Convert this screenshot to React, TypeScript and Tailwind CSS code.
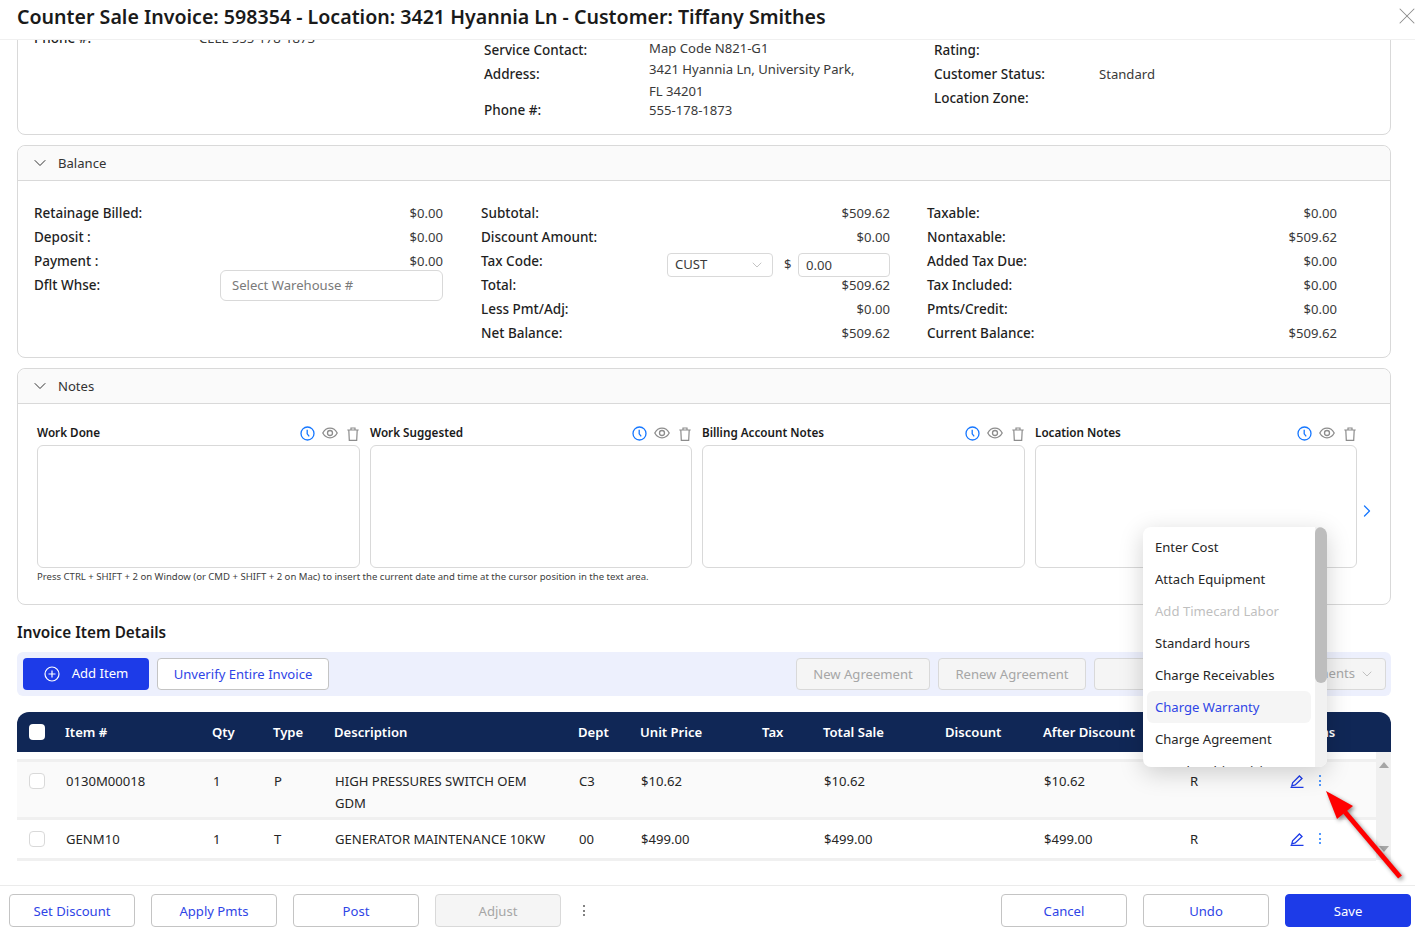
import { ChevronDown, ChevronRight, X } from "lucide-react";
import type { ReactNode } from "react";

const balanceCols: { label: string; value?: string; extra?: "whse" | "tax" }[][] = [
  [
    { label: "Retainage Billed:", value: "$0.00" },
    { label: "Deposit :", value: "$0.00" },
    { label: "Payment :", value: "$0.00" },
    { label: "Dflt Whse:", extra: "whse" },
  ],
  [
    { label: "Subtotal:", value: "$509.62" },
    { label: "Discount Amount:", value: "$0.00" },
    { label: "Tax Code:", extra: "tax" },
    { label: "Total:", value: "$509.62" },
    { label: "Less Pmt/Adj:", value: "$0.00" },
    { label: "Net Balance:", value: "$509.62" },
  ],
  [
    { label: "Taxable:", value: "$0.00" },
    { label: "Nontaxable:", value: "$509.62" },
    { label: "Added Tax Due:", value: "$0.00" },
    { label: "Tax Included:", value: "$0.00" },
    { label: "Pmts/Credit:", value: "$0.00" },
    { label: "Current Balance:", value: "$509.62" },
  ],
];

const notes = ["Work Done", "Work Suggested", "Billing Account Notes", "Location Notes"];

const menuItems = [
  "Enter Cost",
  "Attach Equipment",
  "Add Timecard Labor",
  "Standard hours",
  "Charge Receivables",
  "Charge Warranty",
  "Charge Agreement",
  "Membership Pricing",
];

const gridCols = "grid grid-cols-[48px_147px_61px_61px_244px_62px_122px_61px_122px_98px_147px_100px_1fr]";

function ClockIcon() {
  return (
    <svg width="15" height="15" viewBox="0 0 15 15" fill="none" stroke="#1677ff" strokeWidth="1.300">
      <circle cx="7.5" cy="7.5" r="6.5" />
      <path d="M7.2 3.800v4l2 2.600" />
    </svg>
  );
}

function EyeIcon() {
  return (
    <svg width="16" height="12" viewBox="0 0 16 12" fill="none" stroke="#8c8c8c" strokeWidth="1.300" className="mb-[1px] mr-[2px]">
      <path d="M.8 6c1.700-3.200 4.100-4.800 7.200-4.800S13.500 2.800 15.200 6c-1.700 3.200-4.100 4.800-7.200 4.800S2.500 9.200.8 6z" />
      <circle cx="8" cy="6" r="2.500" />
    </svg>
  );
}

function TrashIcon() {
  return (
    <svg width="12" height="14" viewBox="0 0 12 14" fill="none" stroke="#8c8c8c" strokeWidth="1.200">
      <path d="M.3 3h11.400M4 3V1h4v2M1.800 3l.5 10.400h7.400L10.200 3" />
    </svg>
  );
}

function EditIcon() {
  return (
    <svg width="14" height="13" viewBox="0 0 14 13" fill="none" stroke="#1d3be8" strokeWidth="1.300">
      <path d="M.5 12.300h13M1.800 10.800l.8-3L9.400 1l2.600 2.400-6.800 6.600z" />
    </svg>
  );
}

function Dots({ className }: { className: string }) {
  return (
    <div className={"flex flex-col gap-[2.500px] " + className}>
      <span className="h-[2px] w-[2px] rounded-full bg-current" />
      <span className="h-[2px] w-[2px] rounded-full bg-current" />
      <span className="h-[2px] w-[2px] rounded-full bg-current" />
    </div>
  );
}

function Panel({ title, children }: { title: string; children: ReactNode }) {
  return (
    <section className="rounded-lg border border-[#d9d9d9]">
      <div className="flex h-[35px] items-center gap-[8px] rounded-t-lg border-b border-[#d9d9d9] bg-[#fafafa] pl-[12px]">
        <ChevronDown size={20} strokeWidth={1.200} className="text-[#333]" />
        <span className="pt-[2px] text-[#333]">{title}</span>
      </div>
      {children}
    </section>
  );
}

function FootBtn({ children, variant = "line" }: { children: ReactNode; variant?: "line" | "off" | "fill" }) {
  const tone =
    variant === "fill"
      ? "border-[#1d3be8] bg-[#1d3be8] text-white"
      : variant === "off"
        ? "border-[#d9d9d9] bg-[#f5f5f5] text-[#a6a6a6]"
        : "border-[#c4c4c4] bg-white text-[#2f45e6]";
  return (
    <button className={"flex h-[33px] w-[126px] items-center justify-center rounded border pt-[2px] " + tone}>{children}</button>
  );
}

function InfoRow({ label, value, tall }: { label: string; value?: ReactNode; tall?: boolean }) {
  return (
    <div className={"flex " + (tall ? "h-[36px]" : "h-[24px]")}>
      <span className="w-[165px] shrink-0 text-[13.500px] font-medium leading-[22px]">{label}</span>
      <span className="leading-[22px] text-[#3a3a3a]">{value}</span>
    </div>
  );
}

function TableRow({
  item,
  qty,
  type,
  desc,
  dept,
  price,
  after,
  shade,
}: {
  item: string;
  qty: string;
  type: string;
  desc: ReactNode;
  dept: string;
  price: string;
  after: string;
  shade?: boolean;
}) {
  return (
    <div className={gridCols + " border-b-[3px] border-[#f0f0f0] pt-[8px] leading-[22px] text-[#262626] " + (shade ? "bg-[#fafafa] pb-[3px]" : "bg-white pb-[8px]")}>
      <div className="pl-[12px] pt-[3px]">
        <div className="h-[16px] w-[16px] rounded border border-[#d9d9d9] bg-white" />
      </div>
      <div className="pl-[1px]">{item}</div>
      <div className="pl-[1px]">{qty}</div>
      <div className="pl-[1px]">{type}</div>
      <div className="pl-[1px]">{desc}</div>
      <div className="pl-[1px]">{dept}</div>
      <div className="pl-[1px]">{price}</div>
      <div />
      <div className="pl-[1px]">{price}</div>
      <div />
      <div className="pl-[1px]">{after}</div>
      <div>R</div>
      <div className="flex items-start gap-[15px] pt-[5px]">
        <EditIcon />
        <Dots className="text-[#1677ff]" />
      </div>
    </div>
  );
}

export default function App() {
  return (
    <div
      className="relative flex h-[939px] w-[1415px] flex-col overflow-hidden bg-white text-[13.100px] text-[#1f1f1f]"
      style={{ fontFamily: '"Noto Sans", sans-serif' }}
    >
      <header className="relative z-10 flex h-[40px] shrink-0 items-center justify-between border-b border-[#f0f0f0] bg-white pl-[17px]">
        <h1 className="pb-[5px] text-[19.600px] font-semibold leading-none text-[#1a1a1a]">
          Counter Sale Invoice: 598354 - Location: 3421 Hyannia Ln - Customer: Tiffany Smithes
        </h1>
        <X size={28} strokeWidth={0.900} className="mb-[8px] mr-[-6px] text-[#8c8c8c]" />
      </header>

      <main className="flex h-[845px] shrink-0 flex-col overflow-hidden px-[17px] pr-[24px]">
        <section className="mt-[-20px] h-[115px] shrink-0 rounded-b-lg border border-[#d9d9d9] pl-[16px]">
          <div className="grid grid-cols-[450px_450px_1fr]">
            <div className="pt-[6px]">
              <InfoRow label="Phone #:" value="CELL 555-178-1873" />
            </div>
            <div className="pt-[18px]">
              <InfoRow label="Service Contact:" value={<span className="-mt-[2px] block">Map Code N821-G1</span>} />
              <InfoRow
                label="Address:"
                value={<span className="-mt-[5px] block leading-[22px]">3421 Hyannia Ln, University Park,<br />FL 34201</span>}
                tall
              />
              <InfoRow label="Phone #:" value="555-178-1873" />
            </div>
            <div className="pt-[18px]">
              <InfoRow label="Rating:" />
              <InfoRow label="Customer Status:" value="Standard" />
              <InfoRow label="Location Zone:" />
            </div>
          </div>
        </section>

        <div className="mt-[10px] shrink-0">
          <Panel title="Balance">
            <div className="grid grid-cols-[410px_409px_410px] gap-x-[37px] pb-[12px] pl-[16px] pt-[20px]">
              {balanceCols.map((col, c) => (
                <div key={c} className={"font-medium " + (c === 0 ? "pr-[1px]" : "")}>
                  {col.map((row) => (
                    <div key={row.label} className="flex h-[24px] items-center justify-between pb-[1px]">
                      <span className="pt-[2px] text-[13.500px]">{row.label}</span>
                      {row.value && <span className="pt-[2px] font-normal text-[#3a3a3a]">{row.value}</span>}
                      {row.extra === "whse" && (
                        <div className="mt-[1px] flex h-[31px] w-[223px] items-center rounded-md border border-[#d9d9d9] bg-white pl-[11px] pt-[2px] font-normal text-[#7a7a7a]">
                          Select Warehouse #
                        </div>
                      )}
                      {row.extra === "tax" && (
                        <div className="mt-[9px] flex items-center font-normal text-[#3a3a3a]">
                          <div className="flex h-[24px] w-[106px] items-center justify-between rounded border border-[#d9d9d9] px-[7px]">
                            CUST
                            <ChevronDown size={16} strokeWidth={1} className="text-[#a6a6a6]" />
                          </div>
                          <span className="ml-[11px] w-[14px]">$</span>
                          <div className="h-[24px] w-[92px] rounded border border-[#d9d9d9] pl-[7px] leading-[22px]">0.00</div>
                        </div>
                      )}
                    </div>
                  ))}
                </div>
              ))}
            </div>
          </Panel>
        </div>

        <div className="mt-[10px] shrink-0">
          <Panel title="Notes">
            <div className="relative px-[19px] pb-[20px] pt-[20px]">
              <div className="grid grid-cols-[323px_322px_323px_322px] gap-x-[10px]">
                {notes.map((n) => (
                  <div key={n}>
                    <div className="flex h-[21px] items-start justify-between pr-[1px]">
                      <span className="text-[11.700px] font-semibold leading-[17px] text-[#1a1a1a]">{n}</span>
                      <div className="flex items-center gap-[7px] pt-[2px]">
                        <ClockIcon />
                        <EyeIcon />
                        <TrashIcon />
                      </div>
                    </div>
                    <div className="h-[123px] rounded-md border border-[#d9d9d9]" />
                  </div>
                ))}
              </div>
              <p className="pt-[2px] text-[9.550px] leading-[14px] text-[#404040]">
                Press CTRL + SHIFT + 2 on Window (or CMD + SHIFT + 2 on Mac) to insert the current date and time at the cursor position in the text area.
              </p>
              <ChevronRight size={20} strokeWidth={1.500} className="absolute left-[1339px] top-[97px] text-[#1677ff]" />
            </div>
          </Panel>
        </div>

        <h2 className="mt-[16px] shrink-0 text-[15.300px] font-semibold leading-[22px] text-[#1a1a1a]">Invoice Item Details</h2>

        <div className="mt-[9px] flex h-[44px] shrink-0 items-center rounded-md bg-[#edf0fd] pl-[6px] pr-[5px]">
          <button className="flex h-[32px] w-[126px] items-center justify-center gap-[12px] rounded bg-[#1d3be8] text-white">
            <svg width="16" height="16" viewBox="0 0 16 16" fill="none" stroke="currentColor" strokeWidth="1.200">
              <circle cx="8" cy="8" r="7" />
              <path d="M8 4.500v7M4.500 8h7" />
            </svg>
            Add Item
          </button>
          <button className="ml-[8px] h-[32px] w-[172px] rounded border border-[#c4c4c4] bg-white pt-[2px] text-[#2f45e6]">
            Unverify Entire Invoice
          </button>
          <div className="ml-auto flex gap-[8px] text-[#a6a6a6]">
            <button className="h-[32px] w-[134px] rounded border border-[#d9d9d9] bg-[#f5f5f5] pt-[2px]">New Agreement</button>
            <button className="h-[32px] w-[148px] rounded border border-[#d9d9d9] bg-[#f5f5f5] pt-[2px]">Renew Agreement</button>
            <button className="h-[32px] w-[120px] rounded border border-[#d9d9d9] bg-[#f5f5f5]" />
            <button className="flex h-[32px] w-[164px] items-center justify-end gap-[4px] rounded border border-[#d9d9d9] bg-[#f5f5f5] pr-[10px]">
              Attachments
              <ChevronDown size={16} strokeWidth={1} />
            </button>
          </div>
        </div>

        <div className="mt-[16px] shrink-0">
          <div className={gridCols + " h-[40px] items-center rounded-t-xl bg-[#102756] pt-[2px] font-semibold text-white"}>
            <div className="-mt-[2px] pl-[12px]">
              <div className="h-[16px] w-[16px] rounded bg-white" />
            </div>
            <div>Item #</div>
            <div>Qty</div>
            <div>Type</div>
            <div>Description</div>
            <div>Dept</div>
            <div>Unit Price</div>
            <div>Tax</div>
            <div>Total Sale</div>
            <div>Discount</div>
            <div>After Discount</div>
            <div>Tax</div>
            <div className="-ml-[2px]">Actions</div>
          </div>
          <div className="flex">
            <div className="w-[1359px] pt-[7px]">
              <div className="border-t-[3px] border-[#f0f0f0]">
                <TableRow
                  shade
                  item="0130M00018"
                  qty="1"
                  type="P"
                  desc={<>HIGH PRESSURES SWITCH OEM<br />GDM</>}
                  dept="C3"
                  price="$10.62"
                  after="$10.62"
                />
                <TableRow item="GENM10" qty="1" type="T" desc="GENERATOR MAINTENANCE 10KW" dept="00" price="$499.00" after="$499.00" />
              </div>
            </div>
            <div className="flex h-[108px] w-[15px] flex-col items-center justify-between bg-[#f0f0f0] pb-[8px] pt-[10px]">
              <span className="h-0 w-0 border-x-[5px] border-b-[6px] border-x-transparent border-b-[#a6a6a6]" />
              <span className="h-0 w-0 border-x-[5px] border-t-[6px] border-x-transparent border-t-[#a6a6a6]" />
            </div>
          </div>
        </div>
      </main>

      <footer className="flex h-[54px] shrink-0 items-start gap-[16px] border-t border-[#ebebeb] pl-[9px] pr-[4px] pt-[8px]">
        <FootBtn>Set Discount</FootBtn>
        <FootBtn>Apply Pmts</FootBtn>
        <FootBtn>Post</FootBtn>
        <FootBtn variant="off">Adjust</FootBtn>
        <Dots className="ml-[6px] mt-[11px] text-[#595959]" />
        <div className="ml-auto flex gap-[16px]">
          <FootBtn>Cancel</FootBtn>
          <FootBtn>Undo</FootBtn>
          <FootBtn variant="fill">Save</FootBtn>
        </div>
      </footer>

      {/* row actions menu, open over the table */}
      <div className="absolute left-[1143px] top-[527px] flex h-[240px] w-[184px] overflow-hidden rounded-lg bg-white shadow-[0_6px_24px_rgba(0,0,0,0.18)]">
        <ul className="flex-1 px-[4px] pt-[4px]">
          {menuItems.map((m) => (
            <li
              key={m}
              className={
                "h-[32px] rounded-md pl-[8px] leading-[32px] " +
                (m === "Charge Warranty"
                  ? "bg-[#f5f5f5] text-[#2f45e6]"
                  : m === "Add Timecard Labor"
                    ? "text-[#bfbfbf]"
                    : "text-[#262626]")
              }
            >
              {m}
            </li>
          ))}
        </ul>
        <div className="w-[12px] bg-[#f1f1f1]">
          <div className="h-[156px] rounded-full bg-[#bdbdbd]" />
        </div>
      </div>

      {/* annotation arrow */}
      <svg
        className="absolute left-[1320px] top-[785px] drop-shadow-[2px_2px_2px_rgba(0,0,0,0.45)]"
        width="90"
        height="100"
        viewBox="0 0 90 100"
        fill="none"
      >
        <path d="M80 92 25 27" stroke="#ff0000" strokeWidth="5" />
        <path d="M6 6 33 21 17 34z" fill="#ff0000" />
      </svg>
    </div>
  );
}
